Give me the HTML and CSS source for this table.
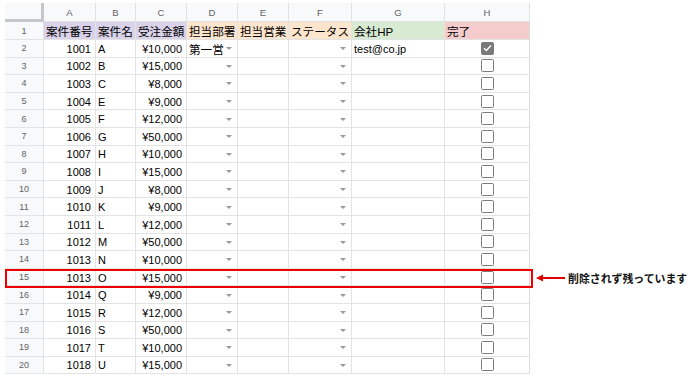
FILE: index.html
```html
<!DOCTYPE html>
<html lang="ja">
<head>
<meta charset="utf-8">
<link rel="stylesheet" href="styles.css">
</head>
<body>
<div class="page">
  <div class="sheet">
    <div class="corner"></div>
    <div class="colh">A</div><div class="colh">B</div><div class="colh">C</div><div class="colh">D</div>
    <div class="colh">E</div><div class="colh">F</div><div class="colh">G</div><div class="colh last">H</div>

    <div class="rowh">1</div>
    <div class="c purple jp">案件番号</div><div class="c purple jp">案件名</div><div class="c purple jp">受注金額</div>
    <div class="c orange jp">担当部署</div><div class="c orange jp">担当営業</div><div class="c orange jp">ステータス</div>
    <div class="c green jp">会社HP</div><div class="c pink jp last">完了</div>
  </div>
  <div class="rows">
    <div class="rowh">2</div><div class="c num">1001</div><div class="c">A</div><div class="c num">¥10,000</div><div class="c dd"><span class="jp">第一営</span><i class="tri"></i></div><div class="c"></div><div class="c dd"><span></span><i class="tri"></i></div><div class="c">test@co.jp</div><div class="c box last"><span class="cb on"><svg width="9" height="8" viewBox="0 0 9 8"><path d="M1 4.2 L3.4 6.5 L8 1.5" fill="none" stroke="#fff" stroke-width="1.4"/></svg></span></div>
    <div class="rowh">3</div><div class="c num">1002</div><div class="c">B</div><div class="c num">¥15,000</div><div class="c dd"><span></span><i class="tri"></i></div><div class="c"></div><div class="c dd"><span></span><i class="tri"></i></div><div class="c"></div><div class="c box last"><span class="cb"></span></div>
    <div class="rowh">4</div><div class="c num">1003</div><div class="c">C</div><div class="c num">¥8,000</div><div class="c dd"><span></span><i class="tri"></i></div><div class="c"></div><div class="c dd"><span></span><i class="tri"></i></div><div class="c"></div><div class="c box last"><span class="cb"></span></div>
    <div class="rowh">5</div><div class="c num">1004</div><div class="c">E</div><div class="c num">¥9,000</div><div class="c dd"><span></span><i class="tri"></i></div><div class="c"></div><div class="c dd"><span></span><i class="tri"></i></div><div class="c"></div><div class="c box last"><span class="cb"></span></div>
    <div class="rowh">6</div><div class="c num">1005</div><div class="c">F</div><div class="c num">¥12,000</div><div class="c dd"><span></span><i class="tri"></i></div><div class="c"></div><div class="c dd"><span></span><i class="tri"></i></div><div class="c"></div><div class="c box last"><span class="cb"></span></div>
    <div class="rowh">7</div><div class="c num">1006</div><div class="c">G</div><div class="c num">¥50,000</div><div class="c dd"><span></span><i class="tri"></i></div><div class="c"></div><div class="c dd"><span></span><i class="tri"></i></div><div class="c"></div><div class="c box last"><span class="cb"></span></div>
    <div class="rowh">8</div><div class="c num">1007</div><div class="c">H</div><div class="c num">¥10,000</div><div class="c dd"><span></span><i class="tri"></i></div><div class="c"></div><div class="c dd"><span></span><i class="tri"></i></div><div class="c"></div><div class="c box last"><span class="cb"></span></div>
    <div class="rowh">9</div><div class="c num">1008</div><div class="c">I</div><div class="c num">¥15,000</div><div class="c dd"><span></span><i class="tri"></i></div><div class="c"></div><div class="c dd"><span></span><i class="tri"></i></div><div class="c"></div><div class="c box last"><span class="cb"></span></div>
    <div class="rowh">10</div><div class="c num">1009</div><div class="c">J</div><div class="c num">¥8,000</div><div class="c dd"><span></span><i class="tri"></i></div><div class="c"></div><div class="c dd"><span></span><i class="tri"></i></div><div class="c"></div><div class="c box last"><span class="cb"></span></div>
    <div class="rowh">11</div><div class="c num">1010</div><div class="c">K</div><div class="c num">¥9,000</div><div class="c dd"><span></span><i class="tri"></i></div><div class="c"></div><div class="c dd"><span></span><i class="tri"></i></div><div class="c"></div><div class="c box last"><span class="cb"></span></div>
    <div class="rowh">12</div><div class="c num">1011</div><div class="c">L</div><div class="c num">¥12,000</div><div class="c dd"><span></span><i class="tri"></i></div><div class="c"></div><div class="c dd"><span></span><i class="tri"></i></div><div class="c"></div><div class="c box last"><span class="cb"></span></div>
    <div class="rowh">13</div><div class="c num">1012</div><div class="c">M</div><div class="c num">¥50,000</div><div class="c dd"><span></span><i class="tri"></i></div><div class="c"></div><div class="c dd"><span></span><i class="tri"></i></div><div class="c"></div><div class="c box last"><span class="cb"></span></div>
    <div class="rowh">14</div><div class="c num">1013</div><div class="c">N</div><div class="c num">¥10,000</div><div class="c dd"><span></span><i class="tri"></i></div><div class="c"></div><div class="c dd"><span></span><i class="tri"></i></div><div class="c"></div><div class="c box last"><span class="cb"></span></div>
    <div class="rowh">15</div><div class="c num">1013</div><div class="c">O</div><div class="c num">¥15,000</div><div class="c dd"><span></span><i class="tri"></i></div><div class="c"></div><div class="c dd"><span></span><i class="tri"></i></div><div class="c"></div><div class="c box last"><span class="cb"></span></div>
    <div class="rowh">16</div><div class="c num">1014</div><div class="c">Q</div><div class="c num">¥9,000</div><div class="c dd"><span></span><i class="tri"></i></div><div class="c"></div><div class="c dd"><span></span><i class="tri"></i></div><div class="c"></div><div class="c box last"><span class="cb"></span></div>
    <div class="rowh">17</div><div class="c num">1015</div><div class="c">R</div><div class="c num">¥12,000</div><div class="c dd"><span></span><i class="tri"></i></div><div class="c"></div><div class="c dd"><span></span><i class="tri"></i></div><div class="c"></div><div class="c box last"><span class="cb"></span></div>
    <div class="rowh">18</div><div class="c num">1016</div><div class="c">S</div><div class="c num">¥50,000</div><div class="c dd"><span></span><i class="tri"></i></div><div class="c"></div><div class="c dd"><span></span><i class="tri"></i></div><div class="c"></div><div class="c box last"><span class="cb"></span></div>
    <div class="rowh">19</div><div class="c num">1017</div><div class="c">T</div><div class="c num">¥10,000</div><div class="c dd"><span></span><i class="tri"></i></div><div class="c"></div><div class="c dd"><span></span><i class="tri"></i></div><div class="c"></div><div class="c box last"><span class="cb"></span></div>
    <div class="rowh">20</div><div class="c num">1018</div><div class="c">U</div><div class="c num">¥15,000</div><div class="c dd"><span></span><i class="tri"></i></div><div class="c"></div><div class="c dd"><span></span><i class="tri"></i></div><div class="c"></div><div class="c box last"><span class="cb"></span></div>
  </div>

  <div class="highlight"></div>
  <svg class="arrow" width="30" height="8" viewBox="0 0 30 8"><line x1="4" y1="4" x2="29" y2="4" stroke="#e00000" stroke-width="2"/><polygon points="0,4 7,0.5 7,7.5" fill="#e00000"/></svg>
  <div class="note">削除されず残っています</div>
</div>
</body>
</html>
```

FILE: styles.css
```css
* { box-sizing: border-box; }
html, body { margin: 0; padding: 0; background: #fff; }
body {
  font-family: "Liberation Sans", "Noto Sans CJK JP", sans-serif;
  font-size: 11px;
  color: #000;
}
.page {
  position: relative;
  width: 690px;
  height: 379px;
  padding: 3px 0 0 5px;
  overflow: hidden;
}
.sheet, .rows {
  display: grid;
  grid-template-columns: 39px 52px 40px 51px 51px 51px 63px 93px 85px;
  width: 525px;
}
.sheet { grid-template-rows: 19px 18px; }
.rows { grid-auto-rows: 17.6px; }

.corner {
  background: #f8f9fa;
  border-right: 3px solid #c4c7c9;
  border-bottom: 3px solid #c4c7c9;
}
.colh {
  background: #f8f9fa;
  border-right: 1px solid #dfe1e3;
  border-bottom: 1px solid #dfe1e3;
  color: #5f6368;
  font-size: 9.5px;
  display: flex;
  align-items: center;
  justify-content: center;
}
.rowh {
  background: #f8f9fa;
  border-right: 1px solid #dfe1e3;
  border-bottom: 1px solid #e2e3e3;
  color: #5f6368;
  font-size: 9px;
  display: flex;
  align-items: center;
  justify-content: center;
}
.c {
  border-right: 1px solid #e2e3e3;
  border-bottom: 1px solid #e2e3e3;
  padding: 1px 3px 0 2px;
  display: flex;
  align-items: center;
  white-space: nowrap;
  overflow: hidden;
}
.c.last { border-right: 1px solid #dadce0; }
.jp { font-size: 11.6px; }
.num { justify-content: flex-end; padding-right: 4px; }
.purple { background: #d9d2e9; }
.orange { background: #fce5cd; }
.green { background: #d9ead3; }
.pink { background: #f4cccc; }
.dd { justify-content: space-between; padding-right: 5px; }
.tri {
  width: 0; height: 0;
  border-left: 3.5px solid transparent;
  border-right: 3.5px solid transparent;
  border-top: 3.5px solid #9a9a9a;
}
.box { justify-content: center; padding: 0; }
.cb {
  width: 13px;
  height: 13px;
  border: 1.6px solid #7d7d7d;
  border-radius: 1.5px;
  display: flex;
  align-items: center;
  justify-content: center;
}
.cb.on { background: #7a7a7a; border-color: #7a7a7a; }

.highlight {
  position: absolute;
  left: 5px;
  top: 269px;
  width: 528px;
  height: 19px;
  border: 2px solid #ee0000;
}
.arrow {
  position: absolute;
  left: 536px;
  top: 274px;
}
.note {
  position: absolute;
  left: 568px;
  top: 270px;
  font-family: "Noto Sans CJK JP", sans-serif;
  font-weight: 700;
  font-size: 10.9px;
  line-height: 17px;
  color: #111;
  white-space: nowrap;
}
```
